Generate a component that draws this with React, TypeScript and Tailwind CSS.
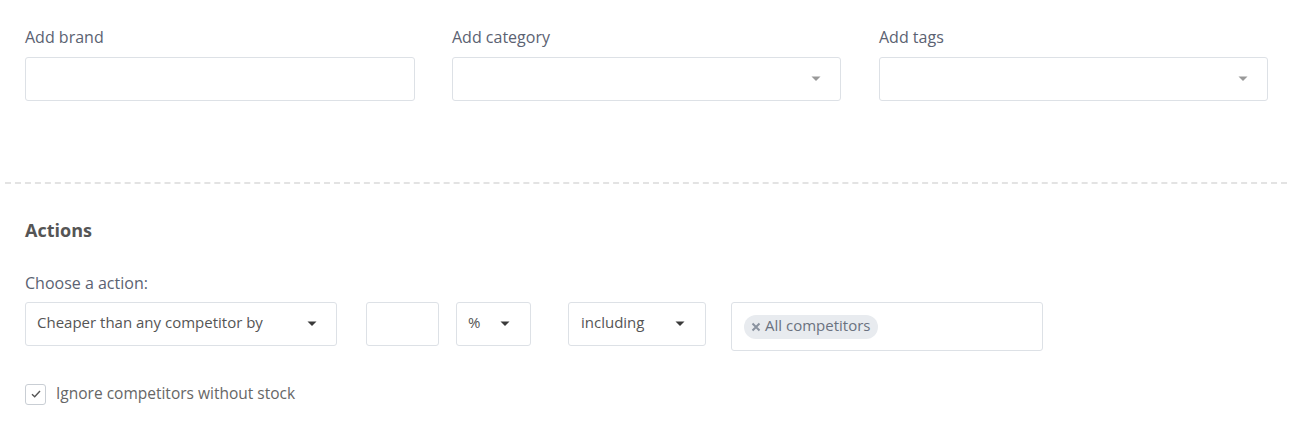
import React from "react";

const Caret = ({ color = "#3a3a3a" }: { color?: string }) => (
  <svg width="10" height="6" viewBox="0 0 10 6" className="shrink-0">
    <path d="M0.5 0.5 L9.5 0.5 L5 5 Z" fill={color} />
  </svg>
);

export default function App() {
  return (
    <div
      className="w-[1295px] h-[427px] bg-white text-[15px] overflow-hidden"
      style={{ fontFamily: "'Open Sans', Lato, sans-serif" }}
    >
      <div className="flex pl-[25px] pt-[26px]">
        <div className="w-[390px]">
          <div className="text-[#5b6272] text-[16px] leading-[22px]">Add brand</div>
          <div className="mt-[9px] h-[44px] border border-[#dde1e6] rounded-[3px]" />
        </div>
        <div className="ml-[37px] w-[389px]">
          <div className="text-[#5b6272] text-[16px] leading-[22px]">Add category</div>
          <div className="mt-[9px] h-[44px] border border-[#dde1e6] rounded-[3px] flex items-center justify-end pr-[19px]">
            <Caret color="#999999" />
          </div>
        </div>
        <div className="ml-[38px] w-[389px]">
          <div className="text-[#5b6272] text-[16px] leading-[22px]">Add tags</div>
          <div className="mt-[9px] h-[44px] border border-[#dde1e6] rounded-[3px] flex items-center justify-end pr-[19px]">
            <Caret color="#999999" />
          </div>
        </div>
      </div>

      <div className="mt-[81px] mx-[5px] w-[1282px] border-t-2 border-dashed border-[#e3e3e3]" />

      <div className="pl-[25px]">
        <div className="mt-[34px] font-bold text-[18px] text-[#555555] leading-[24px]">Actions</div>
        <div className="mt-[31px] text-[#5b6272] text-[16px] leading-[20px]">Choose a action:</div>
        <div className="mt-[9px] flex items-start">
          <div className="w-[312px] h-[44px] border border-[#dde1e6] rounded-[3px] flex items-center justify-between pl-[11px] pr-[19px] pb-[3px] text-[#555]">
            <span>Cheaper than any competitor by</span>
            <span className="pt-[3px]"><Caret /></span>
          </div>
          <div className="ml-[29px] w-[73px] h-[44px] border border-[#dde1e6] rounded-[3px]" />
          <div className="ml-[17px] w-[75px] h-[44px] border border-[#dde1e6] rounded-[3px] flex items-center justify-between pl-[11px] pr-[20px] pb-[3px] text-[#555]">
            <span>%</span>
            <span className="pt-[3px]"><Caret /></span>
          </div>
          <div className="ml-[37px] w-[138px] h-[44px] border border-[#dde1e6] rounded-[3px] flex items-center justify-between pl-[12px] pr-[20px] pb-[3px] text-[#555]">
            <span>including</span>
            <span className="pt-[3px]"><Caret /></span>
          </div>
          <div className="ml-[25px] w-[312px] h-[49px] border border-[#dde1e6] rounded-[3px] flex items-center pl-[12px]">
            <span className="flex items-center h-[24px] rounded-full bg-[#e8ebef] pl-[7px] pr-[8px] pb-[2px] text-[#6b7280] text-[15px]">
              <svg width="10" height="10" viewBox="0 0 10 10" className="mr-[4px] mt-[2px]">
                <path d="M1.5 1.5 L8.5 8.5 M8.5 1.5 L1.5 8.5" stroke="#8a93a0" strokeWidth="2" />
              </svg>
              All competitors
            </span>
          </div>
        </div>
        <div className="mt-[32px] flex items-center">
          <div className="w-[21px] h-[21px] border border-[#c9ced4] rounded-[3px] flex items-center justify-center">
            <svg width="12" height="10" viewBox="0 0 12 10">
              <path d="M2 5.2 L4.7 7.8 L10 2" fill="none" stroke="#555" strokeWidth="1.4" />
            </svg>
          </div>
          <span className="ml-[10px] text-[#666] text-[15.5px] leading-[20px] pb-[2px]">Ignore competitors without stock</span>
        </div>
      </div>
    </div>
  );
}
